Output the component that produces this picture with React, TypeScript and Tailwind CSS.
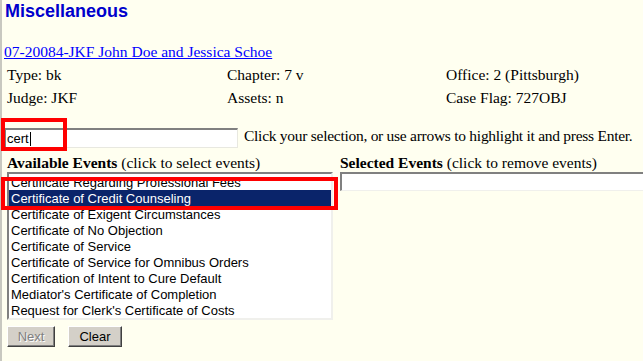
import React from "react";

const serif = { fontFamily: '"Liberation Serif", "Times New Roman", serif' };
const sans = { fontFamily: '"Liberation Sans", Arial, sans-serif' };

const events = [
  "Certificate Regarding Professional Fees",
  "Certificate of Credit Counseling",
  "Certificate of Exigent Circumstances",
  "Certificate of No Objection",
  "Certificate of Service",
  "Certificate of Service for Omnibus Orders",
  "Certification of Intent to Cure Default",
  "Mediator's Certificate of Completion",
  "Request for Clerk's Certificate of Costs",
];

export default function App() {
  return (
    <div
      className="relative w-[643px] h-[361px] overflow-hidden bg-[#fffff0] shadow-[inset_2px_0_0_#c8c8c0] pl-[4px] text-black text-[15.5px]"
      style={serif}
    >
      <h1
        className="h-[22px] leading-[22px] pl-[1px] text-[18px] font-bold text-[#0000cc]"
        style={sans}
      >
        Miscellaneous
      </h1>

      <div className="mt-[21px] h-[18px] leading-[18px]">
        <a href="#" className="text-[#0000ff] underline">
          07-20084-JKF John Doe and Jessica Schoe
        </a>
      </div>

      <div className="mt-[5px] pl-[3px] grid grid-cols-[220px_219px_1fr] gap-y-[5px] leading-[18px]">
        <div>Type: bk</div>
        <div>Chapter: 7 v</div>
        <div>Office: 2 (Pittsburgh)</div>
        <div>Judge: JKF</div>
        <div>Assets: n</div>
        <div>Case Flag: 727OBJ</div>
      </div>

      <div className="mt-[21px] flex items-start">
        <div
          className="shrink-0 w-[234px] h-[20px] bg-white border-t-2 border-l-2 border-t-[#808080] border-l-[#808080] border-r border-b border-r-[#e8e8e0] border-b-[#e8e8e0] flex items-center pl-[1px] text-[13px]"
          style={sans}
        >
          <span>cert</span>
          <span className="ml-[1px] w-[1px] h-[14px] bg-black" />
        </div>
        <div className="ml-[6px] leading-[18px] -mt-[1px] whitespace-nowrap tracking-[-0.27px]">
          Click your selection, or use arrows to highlight it and press Enter.
        </div>
      </div>

      <div className="mt-[6px] pl-[3px] grid grid-cols-[326px_1fr] gap-x-[7px]">
        <div className="leading-[18px] whitespace-nowrap">
          <b>Available Events</b> (click to select events)
        </div>
        <div className="leading-[18px] whitespace-nowrap">
          <b>Selected Events</b> (click to remove events)
        </div>

        <div
          className="h-[148px] bg-white border-t-2 border-l-2 border-t-[#808080] border-l-[#808080] border-r-2 border-b-2 border-r-[#f0f0ec] border-b-[#f0f0ec] overflow-hidden text-[13px]"
          style={sans}
        >
          {events.map((e, i) => (
            <div
              key={e}
              className={
                i === 1
                  ? "h-[16px] leading-[18px] pl-[2px] whitespace-nowrap bg-[#0a246a] text-white"
                  : "h-[16px] leading-[18px] pl-[2px] whitespace-nowrap"
              }
            >
              {e}
            </div>
          ))}
        </div>
        <div className="h-[19px] w-[320px] bg-white border-t-2 border-l-2 border-t-[#808080] border-l-[#808080] border-b border-b-[#f0f0ec]" />
      </div>

      <div className="mt-[6px] pl-[3px] flex gap-[13px] text-[13px]" style={sans}>
        <button
          type="button"
          disabled
          className="w-[48px] h-[21px] bg-[#d4d0c8] border border-t-white border-l-white border-r-[#404040] border-b-[#404040] shadow-[inset_-1px_-1px_0_#808080] text-[#808080] [text-shadow:1px_1px_0_#ffffff]"
        >
          Next
        </button>
        <button
          type="button"
          className="w-[54px] h-[21px] bg-[#d4d0c8] border border-t-white border-l-white border-r-[#404040] border-b-[#404040] shadow-[inset_-1px_-1px_0_#808080] text-black"
        >
          Clear
        </button>
      </div>

      <div className="absolute left-[1px] top-[118px] w-[66px] h-[33px] border-4 border-[#ff0000]" />
      <div className="absolute left-[1px] top-[177px] w-[337px] h-[33px] border-4 border-[#ff0000]" />
    </div>
  );
}
